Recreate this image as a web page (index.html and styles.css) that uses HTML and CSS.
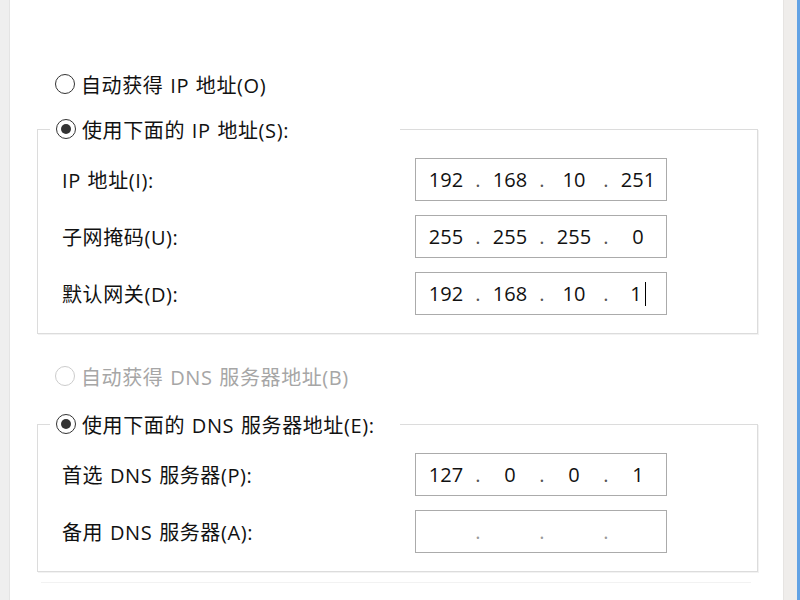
FILE: index.html
```html
<!DOCTYPE html>
<html lang="zh-CN">
<head>
<meta charset="utf-8">
<title>IPv4 属性</title>
<link rel="stylesheet" href="styles.css">
</head>
<body>
<div class="screen">
  <div class="edge-left"></div>
  <div class="main">
    <div class="radio-row first"><span class="radio"></span><span>自动获得 IP 地址(O)</span></div>
    <fieldset class="group">
      <legend class="radio-row"><span class="radio checked"></span><span>使用下面的 IP 地址(S):</span></legend>
      <div class="rows">
        <div class="row"><span class="label">IP 地址(I):</span>
          <div class="ip"><span class="seg">192</span><span class="dot">.</span><span class="seg">168</span><span class="dot">.</span><span class="seg">10</span><span class="dot">.</span><span class="seg">251</span></div>
        </div>
        <div class="row"><span class="label">子网掩码(U):</span>
          <div class="ip"><span class="seg">255</span><span class="dot">.</span><span class="seg">255</span><span class="dot">.</span><span class="seg">255</span><span class="dot">.</span><span class="seg">0</span></div>
        </div>
        <div class="row"><span class="label">默认网关(D):</span>
          <div class="ip"><span class="seg">192</span><span class="dot">.</span><span class="seg">168</span><span class="dot">.</span><span class="seg">10</span><span class="dot">.</span><span class="seg">1<span class="caret"></span></span></div>
        </div>
      </div>
    </fieldset>
    <div class="radio-row disabled"><span class="radio"></span><span>自动获得 DNS 服务器地址(B)</span></div>
    <fieldset class="group second">
      <legend class="radio-row"><span class="radio checked"></span><span>使用下面的 DNS 服务器地址(E):</span></legend>
      <div class="rows">
        <div class="row"><span class="label">首选 DNS 服务器(P):</span>
          <div class="ip"><span class="seg">127</span><span class="dot">.</span><span class="seg">0</span><span class="dot">.</span><span class="seg">0</span><span class="dot">.</span><span class="seg">1</span></div>
        </div>
        <div class="row"><span class="label">备用 DNS 服务器(A):</span>
          <div class="ip empty"><span class="seg"></span><span class="dot">.</span><span class="seg"></span><span class="dot">.</span><span class="seg"></span><span class="dot">.</span><span class="seg"></span></div>
        </div>
      </div>
    </fieldset>
    <div class="divider"></div>
  </div>
  <div class="edge-right"></div>
</div>
</body>
</html>
```

FILE: styles.css
```css
html, body {
  margin: 0;
  padding: 0;
}
body {
  width: 800px;
  height: 600px;
  overflow: hidden;
  background: #ffffff;
  font-family: "Open Sans", "Noto Sans CJK SC", sans-serif;
  color: #111111;
}
.screen {
  display: flex;
  height: 600px;
}
.edge-left {
  width: 9px;
  background: #efefef;
  border-right: 1px solid #e4e4e4;
}
.edge-right {
  width: 13px;
  background: #efedeb;
  border-left: 1px solid #e6e4e2;
  border-right: 3px solid #62a2e4;
}
.main {
  flex: 1;
  padding: 69px 25px 0 27px;
  box-sizing: border-box;
}
.radio-row {
  display: flex;
  align-items: center;
  height: 30px;
  font-size: 20px;
  letter-spacing: 0.6px;
  word-spacing: 1px;
  white-space: nowrap;
}
.first {
  padding-left: 18px;
}
.radio {
  width: 20px;
  height: 20px;
  box-sizing: border-box;
  border: 1.5px solid #333333;
  border-radius: 50%;
  display: flex;
  align-items: center;
  justify-content: center;
  margin-right: 6px;
  flex: none;
}
.radio.checked::after {
  content: "";
  width: 10px;
  height: 10px;
  border-radius: 50%;
  background: #333333;
}
.disabled {
  padding-left: 18px;
  margin-top: 27px;
  color: #a6a6a6;
}
.disabled .radio {
  border-color: #cccccc;
}
.group {
  margin: 15px 0 0 0;
  padding: 0 0 18px 0;
  border: 1px solid #dcdcdc;
  box-shadow: 1px 1px 0 #f2f2f2;
  min-width: 0;
}
.group.second {
  margin-top: 18px;
}
.group legend {
  margin-left: 12px;
  padding: 0 0 0 6px;
  width: 350px;
  box-sizing: border-box;
  background: #ffffff;
}
.rows {
  display: flex;
  flex-direction: column;
  gap: 14px;
  padding: 14px 0 0 24px;
}
.second .rows {
  padding-top: 14px;
}
.row {
  display: flex;
  align-items: center;
  height: 43px;
}
.label {
  width: 353px;
  font-size: 20px;
  letter-spacing: 0.6px;
  word-spacing: 1px;
  white-space: nowrap;
}
.ip {
  width: 252px;
  height: 43px;
  box-sizing: border-box;
  border: 1px solid #ababab;
  display: flex;
  align-items: center;
  padding-left: 3px;
  font-size: 20px;
  color: #111111;
}
.seg {
  width: 54px;
  text-align: center;
  display: flex;
  align-items: center;
  justify-content: center;
  height: 28px;
}
.dot {
  width: 10px;
  text-align: center;
  color: #555555;
}
.empty .dot {
  color: #9a9a9a;
}
.caret {
  display: inline-block;
  width: 1px;
  height: 24px;
  background: #000000;
  margin-left: 3px;
}
.divider {
  height: 1px;
  background: #f2f2f2;
  margin: 10px 7px 0 4px;
}
```
